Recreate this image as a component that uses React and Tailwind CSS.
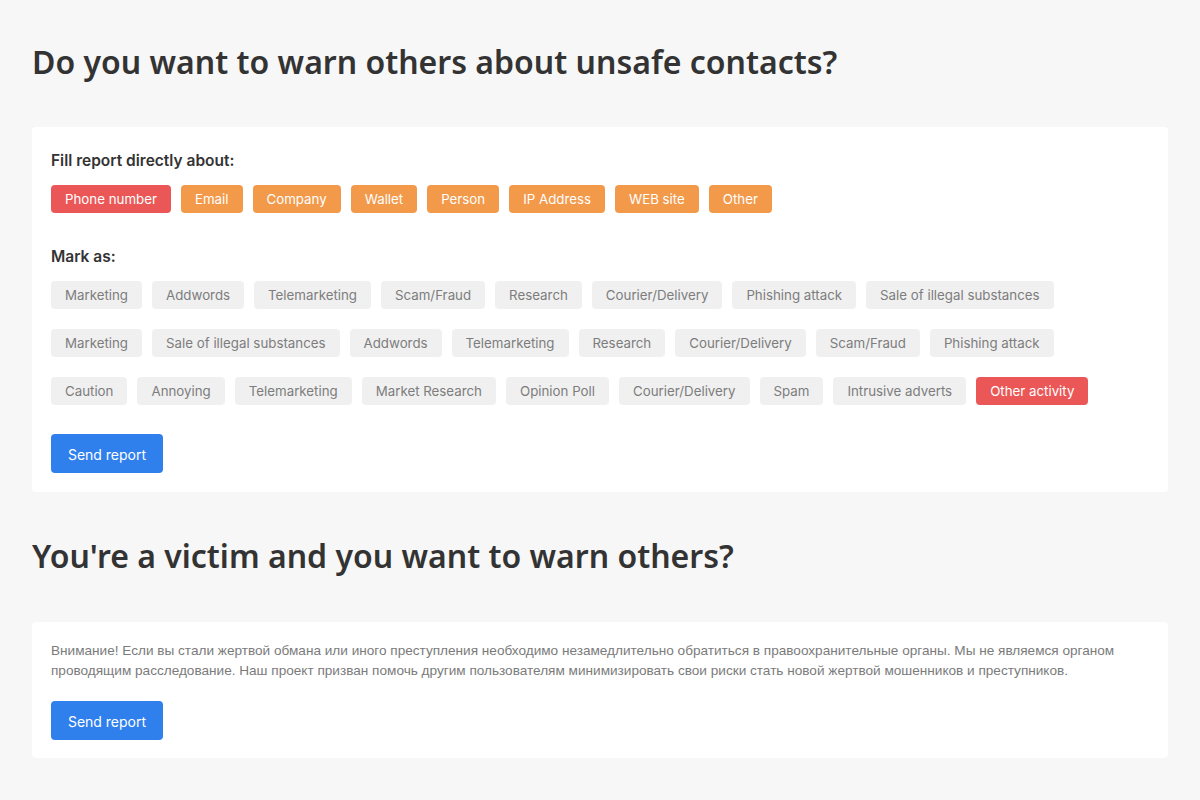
import React from "react";

const sources = [
  { label: "Phone number", active: true },
  { label: "Email" },
  { label: "Company" },
  { label: "Wallet" },
  { label: "Person" },
  { label: "IP Address" },
  { label: "WEB site" },
  { label: "Other" },
];

const markRows = [
  ["Marketing", "Addwords", "Telemarketing", "Scam/Fraud", "Research", "Courier/Delivery", "Phishing attack", "Sale of illegal substances"],
  ["Marketing", "Sale of illegal substances", "Addwords", "Telemarketing", "Research", "Courier/Delivery", "Scam/Fraud", "Phishing attack"],
  ["Caution", "Annoying", "Telemarketing", "Market Research", "Opinion Poll", "Courier/Delivery", "Spam", "Intrusive adverts", "Other activity"],
];

const tagFont = { fontFamily: "Inter, 'Noto Sans', sans-serif" };

const Tag = ({ children, variant = "gray" }) => {
  const colors =
    variant === "red"
      ? "bg-[#eb5757] text-white"
      : variant === "orange"
      ? "bg-[#f2994a] text-white"
      : "bg-[#f0f0f0] text-[#7d7d7d]";
  return (
    <button
      className={`h-[28px] px-[14px] pt-[2px] rounded-[4px] text-[13.3px] leading-none whitespace-nowrap ${colors}`}
      style={tagFont}
    >
      {children}
    </button>
  );
};

const SendButton = () => (
  <button
    className="h-[39px] w-[112px] pt-[1px] rounded-[4px] bg-[#2f80ed] text-white text-[14px]"
    style={tagFont}
  >
    Send report
  </button>
);

export default function App() {
  return (
    <div className="min-h-screen bg-[#f7f7f7] px-[32px] pt-[40px] pb-10">
      <h1
        className="text-[32px] font-semibold text-[#333] leading-[44px]"
        style={{ fontFamily: "'Noto Sans', sans-serif" }}
      >
        Do you want to warn others about unsafe contacts?
      </h1>

      {/* report form */}
      <div className="mt-[43px] bg-white rounded-[4px] px-[19px] pt-[24px] pb-[19px]">
        <div className="text-[15.5px] font-semibold text-[#333] leading-[20px]" style={tagFont}>
          Fill report directly about:
        </div>
        <div className="mt-[14px] flex gap-[10px]">
          {sources.map((s) => (
            <Tag key={s.label} variant={s.active ? "red" : "orange"}>
              {s.label}
            </Tag>
          ))}
        </div>

        <div className="mt-[34px] text-[15.5px] font-semibold text-[#333] leading-[20px]" style={tagFont}>
          Mark as:
        </div>
        <div className="mt-[14px] flex flex-col gap-[20px]">
          {markRows.map((row, i) => (
            <div key={i} className="flex gap-[10px]">
              {row.map((t) => (
                <Tag key={t} variant={t === "Other activity" ? "red" : "gray"}>
                  {t}
                </Tag>
              ))}
            </div>
          ))}
        </div>

        <div className="mt-[29px]">
          <SendButton />
        </div>
      </div>

      <h2
        className="mt-[42px] text-[32px] font-semibold text-[#333] leading-[44px]"
        style={{ fontFamily: "'Noto Sans', sans-serif" }}
      >
        You're a victim and you want to warn others?
      </h2>

      {/* victim notice */}
      <div className="mt-[44px] bg-white rounded-[4px] px-[19px] pt-[19px] pb-[18px]">
        <p
          className="text-[13.6px] leading-[20px] text-[#7b7b7b]"
          style={{ fontFamily: "'Liberation Sans', Arial, sans-serif" }}
        >
          Внимание! Если вы стали жертвой обмана или иного преступления необходимо незамедлительно обратиться в правоохранительные органы. Мы не являемся органом проводящим расследование. Наш проект призван помочь другим пользователям минимизировать свои риски стать новой жертвой мошенников и преступников.
        </p>
        <div className="mt-[20px]">
          <SendButton />
        </div>
      </div>
    </div>
  );
}
